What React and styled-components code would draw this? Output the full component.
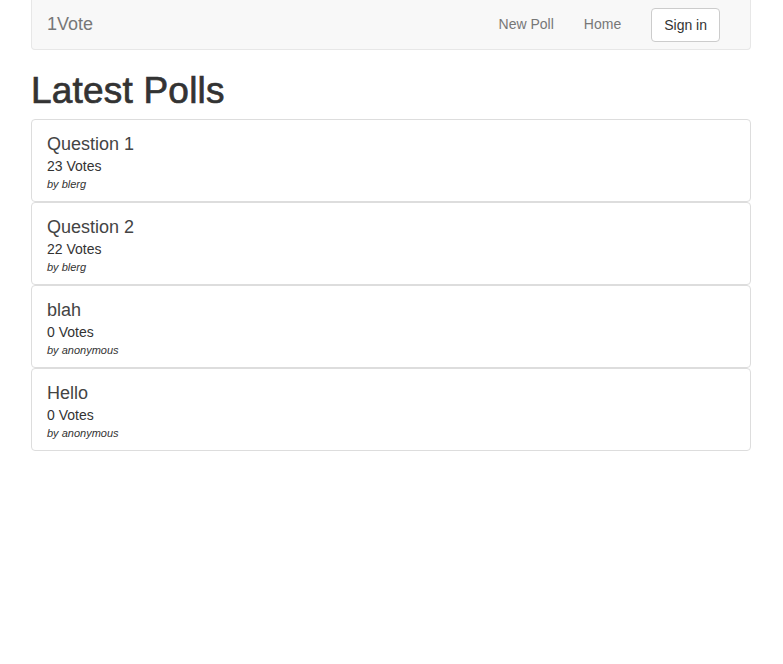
import React from 'react'
import styled, { createGlobalStyle } from 'styled-components'

const Global = createGlobalStyle`
    html, body {
        margin: 0;
        padding: 0;
        background: #fff;
    }
    body {
        font-family: "Liberation Sans", Arial, sans-serif;
        font-size: 14px;
        line-height: 1.42857;
        color: #333;
    }
`;

const Container = styled.div`
    width: 720px;
    margin: 0 auto;
    padding: 0 16px 0 15px;
    box-sizing: content-box;
`;

const Navbar = styled.nav`
    height: 49px;
    display: flex;
    align-items: center;
    justify-content: space-between;
    background-color: #f8f8f8;
    border: 1px solid #e7e7e7;
    border-top: none;
    border-radius: 0 0 4px 4px;
    padding: 0 30px 0 15px;
`;

const Brand = styled.a`
    font-size: 18px;
    color: #777;
    text-decoration: none;
    line-height: 20px;
    margin-top: -1px;
`;

const Links = styled.div`
    display: flex;
    align-items: center;
`;

const NavLink = styled.a`
    padding: 14px 15px 16px;
    color: #777;
    text-decoration: none;
    font-size: 14px;
    line-height: 20px;
`;

const Button = styled.button`
    margin-left: 15px;
    height: 34px;
    padding: 6px 12px;
    background: #fff;
    border: 1px solid #ccc;
    border-radius: 4px;
    color: #333;
    font-family: inherit;
    font-size: 14px;
    line-height: 20px;
`;

const Title = styled.h1`
    font-size: 37px;
    font-weight: 500;
    line-height: 40px;
    margin: 21px 0 8px;
    color: #333;
    letter-spacing: 0.2px;
    -webkit-text-stroke: 0.7px #333;
`;

const List = styled.div`
    display: flex;
    flex-direction: column;
`;

const Card = styled.div`
    border: 1px solid #ddd;
    border-radius: 4px;
    padding: 14px 15px 9px;
`;

const Question = styled.h4`
    margin: 0 0 2px;
    font-size: 18px;
    font-weight: 500;
    line-height: 20px;
    color: #444;
`;

const Votes = styled.div`
    font-size: 14px;
    line-height: 20px;
    color: #333;
`;

const Author = styled.div`
    font-size: 11px;
    line-height: 16px;
    font-style: italic;
    color: #333;
`;

const polls = [
    { q: 'Question 1', votes: 23, by: 'blerg' },
    { q: 'Question 2', votes: 22, by: 'blerg' },
    { q: 'blah', votes: 0, by: 'anonymous' },
    { q: 'Hello', votes: 0, by: 'anonymous' },
]

const App = () => {
    return (
        <>
            <Global />
            <Container>
                <Navbar>
                    <Brand href="#">1Vote</Brand>
                    <Links>
                        <NavLink href="#">New Poll</NavLink>
                        <NavLink href="#">Home</NavLink>
                        <Button>Sign in</Button>
                    </Links>
                </Navbar>
                <Title>Latest Polls</Title>
                <List>
                    {polls.map(p =>
                        <Card key={p.q}>
                            <Question>{p.q}</Question>
                            <Votes>{p.votes} Votes</Votes>
                            <Author>by {p.by}</Author>
                        </Card>
                    )}
                </List>
            </Container>
        </>
    )
}

export default App
